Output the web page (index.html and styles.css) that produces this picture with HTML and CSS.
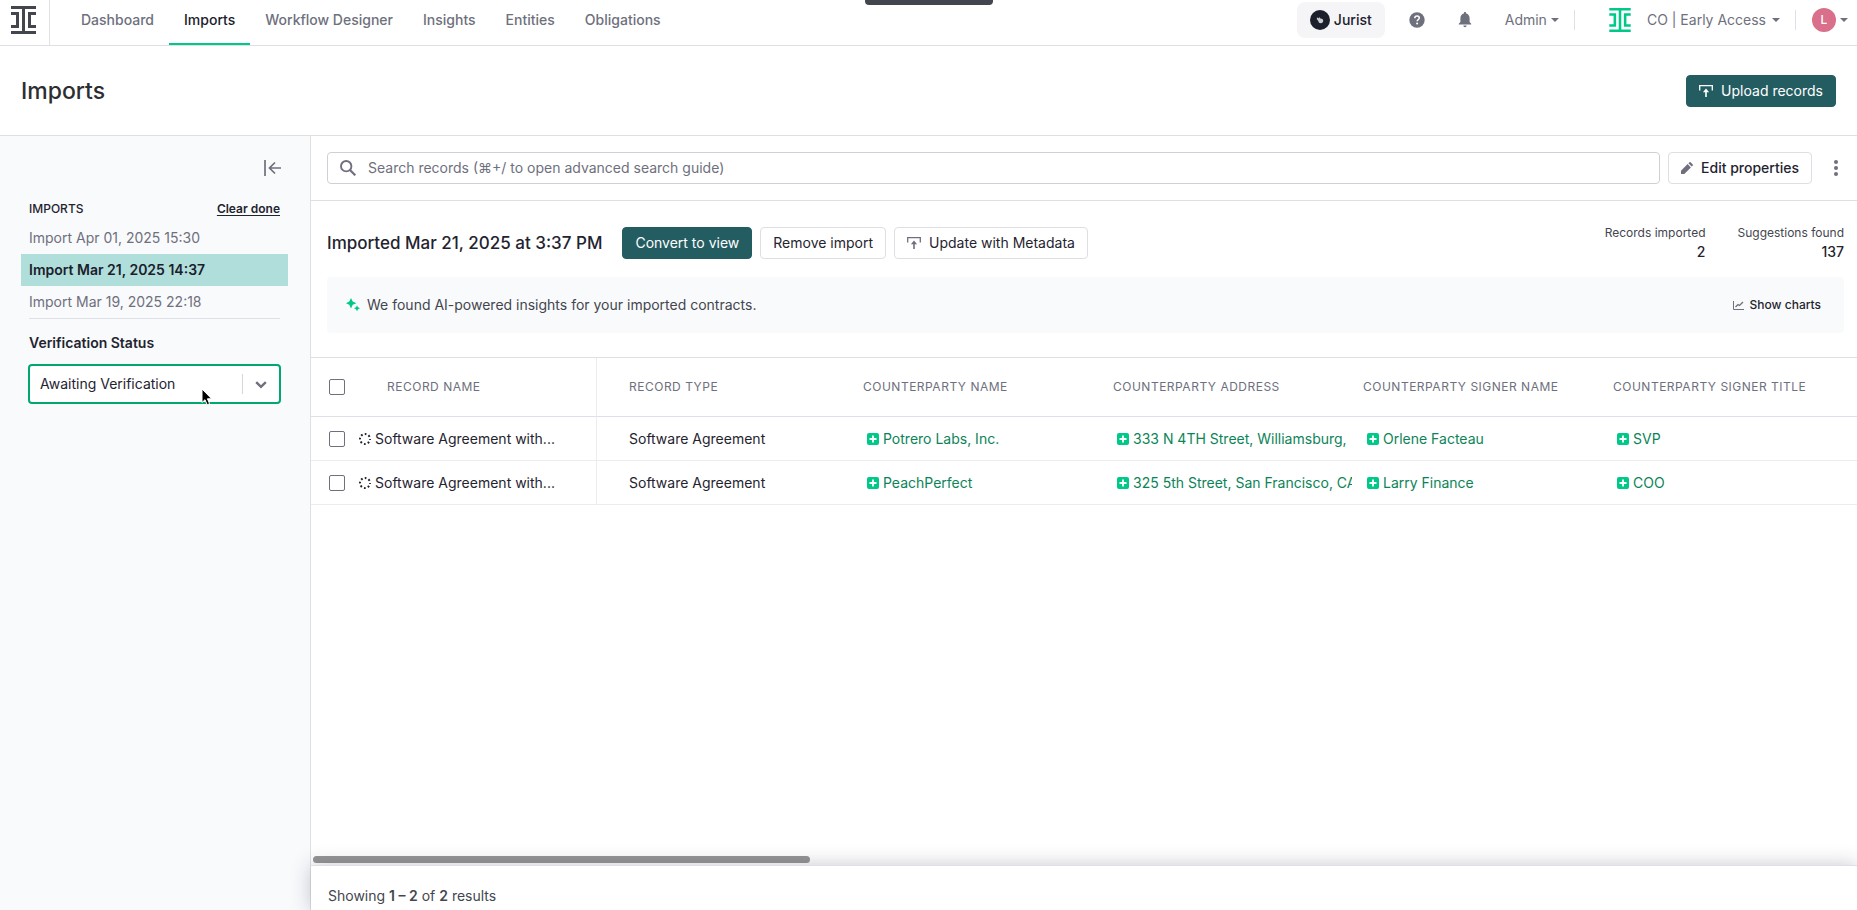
FILE: index.html
```html
<!DOCTYPE html>
<html lang="en">
<head>
<meta charset="utf-8">
<title>Imports</title>
<link rel="stylesheet" href="styles.css">
</head>
<body>
<svg class="defs" aria-hidden="true">
  <symbol id="brand" viewBox="0 0 25 28"><path d="M0 0h25v3H0zM0 25h25v3H0zM11 3h3v22h-3zM0 6h8v16H0v-3h5V9H0zM25 6h-8v16h8v-3h-5V9h5z"/></symbol>
  <symbol id="upload" viewBox="0 0 14 14"><path d="M.7 6.500V1.700h12.600v4.800" fill="none" stroke="currentColor" stroke-width="1.300"/><path d="M7 4.500 3.900 8.200h2.300V13h1.600V8.200h2.300z"/></symbol>
  <symbol id="caret" viewBox="0 0 8 4"><path d="M0 0h8L4 4z"/></symbol>
  <symbol id="plus" viewBox="0 0 12 12"><rect width="12" height="12" rx="2" fill="#00c888"/><path d="M6 2.500v7M2.500 6h7" stroke="#fff" stroke-width="1.800"/></symbol>
  <symbol id="spin" viewBox="0 0 12 12"><circle cx="6" cy="6" r="5" fill="none" stroke="currentColor" stroke-width="2" stroke-dasharray="1.700 2.227" stroke-dashoffset="0.850"/></symbol>
</svg>

<div class="page">
  <header class="topbar">
    <a class="brand" href="#" aria-label="Home"><svg><use href="#brand"/></svg></a>
    <nav class="nav">
      <a href="#">Dashboard</a>
      <a href="#" class="active" aria-current="page">Imports</a>
      <a href="#">Workflow Designer</a>
      <a href="#">Insights</a>
      <a href="#">Entities</a>
      <a href="#">Obligations</a>
    </nav>
    <div class="tools">
      <button class="jurist"><svg viewBox="0 0 20 20"><circle cx="10" cy="10" r="10" fill="#1b202b"/><path d="M7 7.200 8.600 8.600 9.200 7 10.300 8.600c1.600-.3 2.900.8 2.900 2.200 0 1.500-1 2.500-2.400 2.500-1.600 0-2.300-1-2.400-2.300L6.800 9.200z" fill="#c9ccd2"/></svg>Jurist</button>
      <button class="icon-btn help" aria-label="Help"><svg viewBox="0 0 16 16"><circle cx="8" cy="8" r="7.700"/><path d="M5.800 6.200C5.800 4.900 6.700 4 8 4s2.300.8 2.300 2c0 1.500-2.200 1.700-2.200 3.300" fill="none" stroke="#fff" stroke-width="1.500"/><circle cx="8.100" cy="11.500" r="1" fill="#fff"/></svg></button>
      <button class="icon-btn bell" aria-label="Notifications"><svg viewBox="0 0 14 16"><path d="M7 0c.7 0 1.100.5 1.100 1.100v.5C10.300 2.100 11.600 4 11.600 6.200V10L13.200 11.700v.9H.8v-.9L2.400 10V6.200C2.400 4 3.700 2.100 5.900 1.600v-.5C5.900.5 6.300 0 7 0zM5.400 13.500h3.200c0 1-.7 1.700-1.600 1.700s-1.600-.7-1.600-1.700z"/></svg></button>
      <button class="menu admin">Admin<svg class="caret"><use href="#caret"/></svg></button>
      <span class="sep"></span>
      <button class="menu org"><svg class="org-logo"><use href="#brand"/></svg>CO | Early Access<svg class="caret"><use href="#caret"/></svg></button>
      <span class="sep"></span>
      <button class="menu user" aria-label="Account"><span class="avatar">L</span><svg class="caret"><use href="#caret"/></svg></button>
    </div>
    <div class="notch"></div>
  </header>

  <div class="page-head">
    <h1>Imports</h1>
    <button class="btn primary"><svg class="ic"><use href="#upload"/></svg>Upload records</button>
  </div>

  <div class="body">
    <aside class="sidebar">
      <button class="collapse" aria-label="Collapse sidebar"><svg viewBox="0 0 18 16"><path d="M1 0v16M17 8H6M11 2.500 5.500 8l5.500 5.500" fill="none" stroke="currentColor" stroke-width="1.700"/></svg></button>
      <div class="side-head"><h2>IMPORTS</h2><a href="#">Clear done</a></div>
      <ul class="imports">
        <li><a href="#">Import Apr 01, 2025 15:30</a></li>
        <li><a href="#" class="selected">Import Mar 21, 2025 14:37</a></li>
        <li><a href="#">Import Mar 19, 2025 22:18</a></li>
      </ul>
      <div class="filter">
        <label for="status">Verification Status</label>
        <div class="select">
          <select id="status"><option>Awaiting Verification</option></select>
          <svg class="chevron" viewBox="0 0 12 8"><path d="m1.200 1.200 4.800 4.600 4.800-4.600" fill="none" stroke="currentColor" stroke-width="2.400"/></svg>
          <svg class="pointer" viewBox="0 0 12 18"><path d="M1 1v13.500l3-2.800 2.200 5 2.400-1-2.200-4.900h4.200z" fill="#000" stroke="#fff" stroke-width="1"/></svg>
        </div>
      </div>
    </aside>

    <main class="main">
      <div class="searchbar">
        <div class="search">
          <svg viewBox="0 0 16 16"><circle cx="6.200" cy="6.200" r="5.200" fill="none" stroke="currentColor" stroke-width="1.900"/><path d="m10 10 5.300 5.300" stroke="currentColor" stroke-width="2.200"/></svg>
          <input type="text" aria-label="Search records" placeholder="Search records (⌘+/ to open advanced search guide)">
        </div>
        <button class="btn edit"><svg class="ic pencil" viewBox="0 0 12 12"><path d="M0 12V8.700L6.600 2.100l3.300 3.300L3.300 12zM7.400 1.300 8.500.2a.8.8 0 0 1 1.100 0l2.200 2.200c.3.3.3.8 0 1.100l-1.100 1.100z"/></svg>Edit properties</button>
        <button class="kebab" aria-label="More"><svg viewBox="0 0 4 16"><circle cx="2" cy="2" r="2"/><circle cx="2" cy="8" r="2"/><circle cx="2" cy="14" r="2"/></svg></button>
      </div>

      <div class="summary">
        <h2>Imported Mar 21, 2025 at 3:37 PM</h2>
        <div class="actions">
          <button class="btn primary">Convert to view</button>
          <button class="btn">Remove import</button>
          <button class="btn"><svg class="ic"><use href="#upload"/></svg>Update with Metadata</button>
        </div>
        <dl class="stats">
          <div><dt>Records imported</dt><dd>2</dd></div>
          <div><dt>Suggestions found</dt><dd>137</dd></div>
        </dl>
      </div>

      <div class="banner">
        <svg class="spark" viewBox="0 0 14 14"><path d="M5 0 6.700 3.600 10.400 5.200 6.700 6.800 5 10.400 3.300 6.800 0 5.200 3.300 3.600zM11 7.400l1 1.900 2 1-2 1-1 2-1-2-2-1 2-1z"/></svg>
        <p>We found AI-powered insights for your imported contracts.</p>
        <button class="charts"><svg viewBox="0 0 11 9"><path d="M.5 0v8.500H11" fill="none" stroke="currentColor"/><path d="m2.500 6 2.500-2.500 1.500 1L10 1" fill="none" stroke="currentColor" stroke-width="1.300"/></svg>Show charts</button>
      </div>

      <div class="table-wrap">
        <table>
          <colgroup><col class="c-name"><col class="c"><col class="c"><col class="c"><col class="c"><col></colgroup>
          <thead>
            <tr>
              <th class="name"><div class="name-cell"><input type="checkbox" aria-label="Select all"><span>RECORD NAME</span></div></th>
              <th class="type">RECORD TYPE</th><th>COUNTERPARTY NAME</th><th>COUNTERPARTY ADDRESS</th><th>COUNTERPARTY SIGNER NAME</th><th>COUNTERPARTY SIGNER TITLE</th>
            </tr>
          </thead>
          <tbody>
            <tr>
              <td class="name"><div class="name-cell"><input type="checkbox" aria-label="Select record 1"><svg class="spin"><use href="#spin"/></svg>Software Agreement with...</div></td>
              <td class="type">Software Agreement</td>
              <td><div class="found"><svg><use href="#plus"/></svg>Potrero Labs, Inc.</div></td>
              <td><div class="found"><svg><use href="#plus"/></svg>333 N 4TH Street, Williamsburg,</div></td>
              <td><div class="found"><svg><use href="#plus"/></svg>Orlene Facteau</div></td>
              <td><div class="found"><svg><use href="#plus"/></svg>SVP</div></td>
            </tr>
            <tr>
              <td class="name"><div class="name-cell"><input type="checkbox" aria-label="Select record 2"><svg class="spin"><use href="#spin"/></svg>Software Agreement with...</div></td>
              <td class="type">Software Agreement</td>
              <td><div class="found"><svg><use href="#plus"/></svg>PeachPerfect</div></td>
              <td><div class="found"><svg><use href="#plus"/></svg>325 5th Street, San Francisco, CA</div></td>
              <td><div class="found"><svg><use href="#plus"/></svg>Larry Finance</div></td>
              <td><div class="found"><svg><use href="#plus"/></svg>COO</div></td>
            </tr>
          </tbody>
        </table>
      </div>
      <div class="scroll-track"><div class="scroll-thumb"></div></div>
      <footer class="footer">Showing <b>1 – 2</b> of <b>2</b> results</footer>
    </main>
  </div>
</div>
</body>
</html>
```

FILE: styles.css
```css
* { box-sizing: border-box; margin: 0; }
body { font: 14px/20px Inter, "Liberation Sans", sans-serif; color: #1f242f; background: #fff; }
button, input, select { font: inherit; color: inherit; }
button { border: 0; background: none; padding: 0; cursor: pointer; }
a { color: inherit; text-decoration: none; }
svg { display: block; flex: none; fill: currentColor; }
.defs { position: absolute; width: 0; height: 0; }
.page { display: flex; flex-direction: column; height: 100vh; overflow: hidden; }

.topbar { position: relative; display: flex; height: 46px; flex: none; border-bottom: 1px solid #dfe0e5; color: #6e707d; font-weight: 500; }
.brand { width: 50px; padding: 6px 0 0 11px; border-right: 1px solid #e0e0e6; color: #43464f; }
.brand svg { width: 25px; height: 28px; }
.nav { display: flex; padding-left: 16px; }
.nav a { padding: 10px 15px 0; }
.nav .active { color: #1b202b; box-shadow: inset 0 -2px #00c888; }
.tools { display: flex; align-items: center; height: 40px; margin-left: auto; padding-right: 9px; }
.jurist { display: flex; align-items: center; gap: 4px; height: 36px; padding: 0 13px; border-radius: 8px; background: #f5f5f8; color: #1b202b; font-weight: 500; }
.jurist svg { width: 20px; height: 20px; }
.icon-btn svg { width: 16px; height: 16px; }
.help { margin-left: 24px; }
.bell { margin-left: 32px; }
.menu { display: flex; align-items: center; font-weight: 400; }
.caret { width: 8px; height: 4px; margin-left: 4px; }
.admin { margin: 0 15px 0 32px; }
.sep { width: 1px; height: 20px; background: #dfe0e5; }
.org { margin: 0 15px 0 34px; }
.org-logo { width: 22px; height: 24px; margin-right: 16px; color: #00c888; }
.org .caret { margin-left: 6px; }
.user { margin-left: 16px; }
.avatar { width: 24px; height: 24px; border-radius: 50%; background: #d96f8b; color: #fff; font-size: 12px; line-height: 24px; font-weight: 500; }
.notch { position: absolute; top: 0; left: 50%; width: 128px; height: 5px; margin-left: -64px; border-radius: 0 0 4px 4px; background: #43464f; }

.page-head { display: flex; flex: none; align-items: center; justify-content: space-between; height: 90px; padding: 0 21px; border-bottom: 1px solid #dfe0e5; }
h1 { color: #2d2e31; font-size: 23px; line-height: 32px; font-weight: 500; }
.btn { display: flex; align-items: center; gap: 8px; height: 32px; padding: 0 12px; border: 1px solid #dedfe5; border-radius: 4px; background: #fff; font-weight: 400; white-space: nowrap; }
.btn.edit { font-weight: 500; }
.btn .ic { width: 14px; height: 14px; color: #6e707d; }
.btn .pencil { width: 12px; height: 12px; }
.btn.primary { border-color: #235d62; background: #235d62; color: #fff; }
.btn.primary .ic { color: #fff; }

.body { display: flex; flex: 1; min-height: 0; }
.sidebar { width: 311px; flex: none; padding: 24px 22px 0 21px; border-right: 1px solid #dfe0e5; background: #f9fafc; }
.collapse { display: block; margin: 0 6px 0 auto; color: #6e707d; }
.collapse svg { width: 18px; height: 16px; }
.side-head { display: flex; align-items: center; justify-content: space-between; margin: 23px 8px 0; font-size: 12px; }
.side-head h2 { font-size: 12px; font-weight: 500; }
.side-head a { font-weight: 600; text-decoration: underline; text-underline-offset: 2px; }
.imports { list-style: none; margin-top: 3px; padding: 0; }
.imports a { display: block; padding: 6px 8px; color: #6e707d; }
.imports .selected { background: #b0dedb; color: #1b202b; font-weight: 600; }
.filter { margin: 0 8px; padding-top: 14px; border-top: 1px solid #dfe0e5; }
.filter label { font-weight: 600; }
.select { position: relative; margin: 11px -1px 0; }
.select select { width: 100%; height: 40px; padding: 0 10px; border: 2px solid #00a870; border-radius: 4px; background: #fff; appearance: none; }
.select::after { content: ""; position: absolute; top: 10px; right: 38px; width: 1px; height: 20px; background: #d5d6dc; }
.chevron { position: absolute; top: 17px; right: 14px; width: 12px; height: 8px; color: #6e707d; }
.pointer { position: absolute; top: 24px; left: 173px; width: 12px; height: 18px; }

.main { display: flex; flex: 1; flex-direction: column; min-width: 0; }
.searchbar { display: flex; flex: none; gap: 8px; padding: 16px 13px 16px 16px; border-bottom: 1px solid #dfe0e5; }
.search { display: flex; flex: 1; align-items: center; height: 32px; gap: 12px; padding: 0 12px; border: 1px solid #cfd0d7; border-radius: 4px; color: #6e707d; }
.search svg { width: 16px; height: 16px; }
.search input { flex: 1; border: 0; outline: 0; padding: 0; background: none; }
.search input::placeholder { color: #6e707d; opacity: 1; }
.kebab { display: grid; place-items: center; width: 16px; margin-left: 8px; color: #6e707d; }
.kebab svg { width: 4px; height: 16px; }

.summary { display: flex; align-items: center; gap: 20px; padding: 23px 13px 15px 16px; }
.summary h2 { font-size: 17px; line-height: 24px; font-weight: 500; white-space: nowrap; }
.actions { display: flex; gap: 8px; }
.stats { display: flex; gap: 32px; margin-left: auto; text-align: right; }
.stats dt { color: #43464f; font-size: 12px; line-height: 18px; }
.stats dd { font-weight: 500; line-height: 20px; }
.banner { display: flex; align-items: center; height: 56px; flex: none; margin: 0 13px 24px 16px; padding: 0 23px 0 19px; border-radius: 4px; background: #f9fafc; color: #43464f; }
.spark { width: 14px; height: 14px; margin-right: 7px; color: #00c888; }
.charts { display: flex; align-items: center; gap: 6px; margin-left: auto; color: #1f242f; font-size: 12px; font-weight: 500; }
.charts svg { width: 11px; height: 9px; color: #6e707d; }

.table-wrap { flex: 1; min-height: 0; overflow: hidden; border-top: 1px solid #dfe0e5; }
table { width: 100%; table-layout: fixed; border-collapse: separate; border-spacing: 0; }
.c-name { width: 286px; }
.c { width: 250px; }
th, td { padding: 0 0 0 16px; text-align: left; white-space: nowrap; }
th { height: 59px; border-bottom: 1px solid #dfe0e8; color: #6e707d; font-size: 12px; font-weight: 400; letter-spacing: 0.5px; }
td { height: 44px; border-bottom: 1px solid #ececf0; }
th.name, td.name { border-right: 1px solid #ececf0; }
th.type, td.type { padding-left: 32px; }
.name-cell { display: flex; align-items: center; }
.name-cell span { margin-left: 42px; }
.name-cell input { appearance: none; flex: none; width: 16px; height: 16px; margin: 0 0 0 2px; border: 1px solid #6e707d; border-radius: 2px; background: #fff; }
.spin { width: 12px; height: 12px; margin: 0 4px 0 14px; }
.found { display: flex; align-items: center; gap: 4px; padding-left: 4px; color: #0b8457; overflow: clip; overflow-clip-margin: 5px; }
.found svg { width: 12px; height: 12px; }
.scroll-track { flex: none; height: 10px; padding: 1px 2px; }
.scroll-thumb { width: 32.2%; height: 7px; border-radius: 4px; background: #969696; }
.footer { flex: none; height: 45px; padding: 20px 17px 0; border-top: 1px solid #dfe0e5; background: #fff; color: #43464f; box-shadow: 0 0 20px rgba(30, 35, 60, 0.25); clip-path: inset(-24px 0 0 -24px); }
.footer b { font-weight: 600; }
```
